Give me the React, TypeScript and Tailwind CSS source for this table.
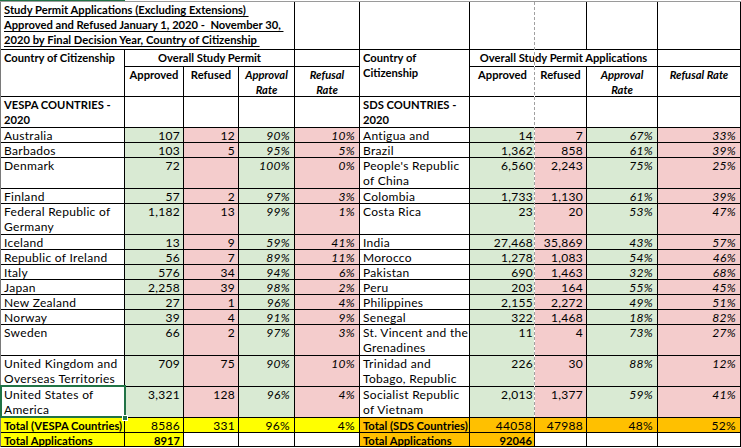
import React from 'react';

type Row = {
  l: string[]; la: string; lr: string; lap: string; lrp: string;
  r: string[]; ra: string; rr: string; rap: string; rrp: string; sel?: boolean;
};

const rows: Row[] = [
  { l: ['Australia'], la: '107', lr: '12', lap: '90%', lrp: '10%', r: ['Antigua and'], ra: '14', rr: '7', rap: '67%', rrp: '33%' },
  { l: ['Barbados'], la: '103', lr: '5', lap: '95%', lrp: '5%', r: ['Brazil'], ra: '1,362', rr: '858', rap: '61%', rrp: '39%' },
  { l: ['Denmark'], la: '72', lr: '', lap: '100%', lrp: '0%', r: ["People's Republic", 'of China'], ra: '6,560', rr: '2,243', rap: '75%', rrp: '25%' },
  { l: ['Finland'], la: '57', lr: '2', lap: '97%', lrp: '3%', r: ['Colombia'], ra: '1,733', rr: '1,130', rap: '61%', rrp: '39%' },
  { l: ['Federal Republic of', 'Germany'], la: '1,182', lr: '13', lap: '99%', lrp: '1%', r: ['Costa Rica'], ra: '23', rr: '20', rap: '53%', rrp: '47%' },
  { l: ['Iceland'], la: '13', lr: '9', lap: '59%', lrp: '41%', r: ['India'], ra: '27,468', rr: '35,869', rap: '43%', rrp: '57%' },
  { l: ['Republic of Ireland'], la: '56', lr: '7', lap: '89%', lrp: '11%', r: ['Morocco'], ra: '1,278', rr: '1,083', rap: '54%', rrp: '46%' },
  { l: ['Italy'], la: '576', lr: '34', lap: '94%', lrp: '6%', r: ['Pakistan'], ra: '690', rr: '1,463', rap: '32%', rrp: '68%' },
  { l: ['Japan'], la: '2,258', lr: '39', lap: '98%', lrp: '2%', r: ['Peru'], ra: '203', rr: '164', rap: '55%', rrp: '45%' },
  { l: ['New Zealand'], la: '27', lr: '1', lap: '96%', lrp: '4%', r: ['Philippines'], ra: '2,155', rr: '2,272', rap: '49%', rrp: '51%' },
  { l: ['Norway'], la: '39', lr: '4', lap: '91%', lrp: '9%', r: ['Senegal'], ra: '322', rr: '1,468', rap: '18%', rrp: '82%' },
  { l: ['Sweden'], la: '66', lr: '2', lap: '97%', lrp: '3%', r: ['St. Vincent and the', 'Grenadines'], ra: '11', rr: '4', rap: '73%', rrp: '27%' },
  { l: ['United Kingdom and', 'Overseas Territories'], la: '709', lr: '75', lap: '90%', lrp: '10%', r: ['Trinidad and', 'Tobago, Republic'], ra: '226', rr: '30', rap: '88%', rrp: '12%' },
  { l: ['United States of', 'America'], la: '3,321', lr: '128', lap: '96%', lrp: '4%', r: ['Socialist Republic', 'of Vietnam'], ra: '2,013', rr: '1,377', rap: '59%', rrp: '41%', sel: true },
];

const B = 'font-bold text-[11.2px] tracking-[0px]';
const base = 'border-r border-b border-black overflow-hidden whitespace-nowrap';
const txt = `${base} pl-[3px] text-left bg-white`;
const ttxt = `${base} pl-[3px] text-left bg-white ${B}`;
const blank = `${base} bg-white`;
const numG = `${base} pr-[3px] text-right bg-[#d9ead3]`;
const numGNoR = 'border-b border-black overflow-hidden whitespace-nowrap pr-[2px] text-right bg-[#d9ead3]';
const numP = `${base} pr-[3px] text-right bg-[#f4cccc]`;
const pctG = `${base} pr-[4px] text-right italic bg-[#d9ead3]`;
const pctP = `${base} pr-[4px] text-right italic bg-[#f4cccc]`;
const hdr = `${base} ${B} text-center bg-white`;
const hdrI = `${base} ${B} italic text-center bg-white`;
const yel = `${base} bg-[#ffff00]`;
const org = `${base} bg-[#ffc000]`;

function Lines({ v }: { v: string[] }) {
  return (
    <>
      {v.map((s, i) => (
        <div key={i}>{s}</div>
      ))}
    </>
  );
}

export default function App() {
  return (
    <div className="w-[741px] h-[448px] bg-white text-black overflow-hidden [font-family:Lato,'Liberation_Sans',sans-serif] text-[12px] tracking-[0.3px] leading-[15px]">
      <div className="flex h-px">
        <div className="w-[125px] bg-[#217346]" />
        <div className="flex-1 bg-white" />
      </div>
      <div className="h-px bg-[#9a9a9a]" />
      <div className="relative border-l border-[#7a7a7a] grid grid-cols-[124px_59px_55px_56px_65px_110px_65px_52px_71px_83px] grid-rows-[48px_17px_30px_31px_15px_15px_31px_15px_31px_15px_15px_15px_15px_15px_15px_31px_31px_31px_15px_14px]">
        {/* Title row */}
        <div className={`${blank} col-span-4 pl-[3px] ${B}`}>
          <div><span className="underline underline-offset-[2px]">Study Permit Applications (Excluding Extensions)&nbsp;</span></div>
          <div><span className="underline underline-offset-[2px]">Approved and Refused January 1, 2020 -&nbsp; November 30,&nbsp;</span></div>
          <div><span className="underline underline-offset-[2px]">2020 by Final Decision Year, Country of Citizenship&nbsp;</span></div>
        </div>
        <div className={blank} />
        <div className={blank} />
        <div className="border-b border-black bg-white" />
        <div className={blank} />
        <div className={blank} />
        <div className={blank} />

        {/* Header row 1 */}
        <div className={`${ttxt} row-span-2`}>Country of Citizenship</div>
        <div className={`${hdr} col-span-3`}>Overall Study Permit</div>
        <div className={blank} />
        <div className={`${ttxt} row-span-2`}>
          <div>Country of</div>
          <div>Citizenship</div>
        </div>
        <div className={`${hdr} col-span-3`}>Overall Study Permit Applications</div>
        <div className={blank} />

        {/* Header row 2 */}
        <div className={hdr}>Approved</div>
        <div className={hdr}>Refused</div>
        <div className={hdrI}>
          <div>Approval</div>
          <div>Rate</div>
        </div>
        <div className={hdrI}>
          <div>Refusal</div>
          <div>Rate</div>
        </div>
        <div className={`border-b border-black ${B} text-center bg-white`}>Approved</div>
        <div className={hdr}>Refused</div>
        <div className={hdrI}>
          <div>Approval</div>
          <div>Rate</div>
        </div>
        <div className={hdrI}>Refusal Rate</div>

        {/* Section row */}
        <div className={ttxt}>
          <div>VESPA COUNTRIES -</div>
          <div>2020</div>
        </div>
        <div className={blank} />
        <div className={blank} />
        <div className={blank} />
        <div className={blank} />
        <div className={ttxt}>
          <div>SDS COUNTRIES -</div>
          <div>2020</div>
        </div>
        <div className="border-b border-black bg-white" />
        <div className={blank} />
        <div className={blank} />
        <div className={blank} />

        {rows.map((r, i) => (
          <React.Fragment key={i}>
            <div className={`${txt} ${r.sel ? 'relative overflow-visible' : ''}`}>
              <Lines v={r.l} />
              {r.sel && (
                <>
                  <div className="absolute left-[-1px] top-[-2px] w-[126px] h-[33px] border-2 border-[#217346] pointer-events-none" />
                  <div className="absolute left-[121px] top-[28px] w-[6px] h-[6px] bg-[#217346] border border-white pointer-events-none" />
                </>
              )}
            </div>
            <div className={numG}>{r.la}</div>
            <div className={numP}>{r.lr}</div>
            <div className={pctG}>{r.lap}</div>
            <div className={pctP}>{r.lrp}</div>
            <div className={txt}>
              <Lines v={r.r} />
            </div>
            <div className={numGNoR}>{r.ra}</div>
            <div className={numP}>{r.rr}</div>
            <div className={pctG}>{r.rap}</div>
            <div className={pctP}>{r.rrp}</div>
          </React.Fragment>
        ))}

        {/* Totals */}
        <div className={`${yel} pl-[3px] ${B}`}>Total (VESPA Countries)</div>
        <div className={`${yel} pr-[3px] text-right`}>8586</div>
        <div className={`${yel} pr-[3px] text-right`}>331</div>
        <div className={`${yel} pr-[4px] text-right`}>96%</div>
        <div className={`${yel} pr-[4px] text-right`}>4%</div>
        <div className={`${org} pl-[3px] ${B}`}>Total (SDS Countries)</div>
        <div className={`${org} pr-[2px] text-right`}>44058</div>
        <div className={`${org} pr-[3px] text-right`}>47988</div>
        <div className={`${org} pr-[4px] text-right`}>48%</div>
        <div className={`${org} pr-[4px] text-right`}>52%</div>

        <div className={`${yel} pl-[3px] ${B}`}>Total Applications</div>
        <div className={`${yel} pr-[3px] text-right ${B}`}>8917</div>
        <div className={blank} />
        <div className={blank} />
        <div className={blank} />
        <div className={`${org} pl-[3px] ${B}`}>Total Applications</div>
        <div className={`${org} pr-[2px] text-right ${B}`}>92046</div>
        <div className={blank} />
        <div className={blank} />
        <div className={blank} />

        {/* Page break line */}
        <div className="absolute left-[533px] top-0 w-px h-[415px] bg-[repeating-linear-gradient(to_bottom,#a0a0a0_0px,#a0a0a0_3px,#ffffff_3px,#ffffff_5px)] pointer-events-none" />
      </div>
    </div>
  );
}
